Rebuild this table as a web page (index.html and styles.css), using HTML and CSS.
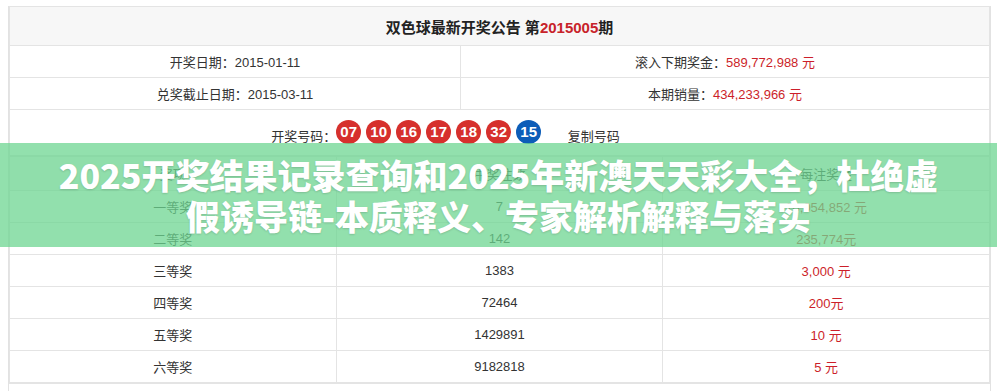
FILE: index.html
```html
<!DOCTYPE html>
<html lang="zh-CN">
  <head>
    <meta charset="UTF-8" />
    <title>双色球最新开奖公告</title>
    <link rel="stylesheet" href="styles.css">
  </head>

  <body>
    <div class="board">
      <table class="notice">
        <tr>
          <th colspan="2" class="title">双色球最新开奖公告 第<span class="red">2015005</span>期</th>
        </tr>
        <tr>
          <td class="half">开奖日期：2015-01-11</td>
          <td>滚入下期奖金：<span class="red">589,772,988 元</span></td>
        </tr>
        <tr>
          <td class="half">兑奖截止日期：2015-03-11</td>
          <td>本期销量：<span class="red">434,233,966 元</span></td>
        </tr>
        <tr>
          <td colspan="2" class="draw">
            开奖号码：<span class="ball">07</span><span class="ball">10</span><span class="ball">16</span><span class="ball">17</span><span class="ball">18</span><span class="ball">32</span><span class="ball blue">15</span>
            <a class="copy">复制号码</a>
          </td>
        </tr>
      </table>

      <table class="prizes">
        <tr class="head">
          <th>奖项</th>
          <th>中奖注数</th>
          <th>每注奖金</th>
        </tr>
        <tr><td>一等奖</td><td>7</td><td class="red">10,054,852 元</td></tr>
        <tr><td>二等奖</td><td>142</td><td class="red">235,774元</td></tr>
        <tr><td>三等奖</td><td>1383</td><td class="red">3,000 元</td></tr>
        <tr><td>四等奖</td><td>72464</td><td class="red">200元</td></tr>
        <tr><td>五等奖</td><td>1429891</td><td class="red">10 元</td></tr>
        <tr><td>六等奖</td><td>9182818</td><td class="red">5 元</td></tr>
      </table>
    </div>

    <!-- 页面上方的绿色标题横幅 -->
    <div class="banner">
      <h1>2025开奖结果记录查询和2025年新澳天天彩大全，杜绝虚<br />假诱导链-本质释义、专家解析解释与落实</h1>
    </div>
  </body>
</html>
```

FILE: styles.css
```css
body {
  margin: 0;
  height: 391px;
  overflow: hidden;
  background: #fff;
  font-family: "Liberation Sans", "Noto Sans CJK SC", sans-serif;
  font-size: 13px;
  color: #333;
}

.board {
  margin: 6px 6px 0 8px;
  height: 400px;
  border-left: 1px solid #e2e2e2;
  border-right: 1px solid #e2e2e2;
}

table {
  width: 100%;
  border-collapse: collapse;
}

td,
th {
  border: 1px solid #e4e4e4;
  text-align: center;
  padding: 0;
  font-weight: normal;
}

.red {
  color: #cc1f2a;
}

/* 公告表 */
.title {
  height: 38px;
  background: #f7f7f7;
  font-size: 15px;
  font-weight: bold;
  color: #222;
}

.title .red {
  color: #c8232a;
}

.notice td {
  height: 31px;
}

.notice .half {
  width: 450px;
}

.notice .draw {
  height: 45px;
  /* 号码组整体偏左 */
  padding-right: 108px;
  vertical-align: middle;
}

.ball {
  display: inline-block;
  width: 25px;
  height: 24px;
  margin-right: 5px;
  border-radius: 50%;
  background: #d6302d;
  color: #fff;
  font-size: 15px;
  font-weight: bold;
  line-height: 24px;
  text-align: center;
  vertical-align: 4px;
}

.ball.blue {
  background: #0d5db8;
}

.copy {
  margin-left: 18px;
  color: #333;
  cursor: pointer;
}

/* 奖金表 */
.prizes {
  border-bottom: 2px solid #e4e4e4;
}

.prizes th,
.prizes td {
  width: 33.33%;
  height: 31px;
}

.prizes .head th {
  height: 33px;
  background: #f7f7f7;
}

/* 横幅 */
.banner {
  position: absolute;
  top: 143px;
  left: 0;
  width: 997px;
  height: 104px;
  display: flex;
  align-items: center;
  justify-content: center;
  background: rgba(110, 214, 146, 0.75);
}

.banner h1 {
  margin: 0;
  font-family: "Noto Sans CJK SC", sans-serif;
  font-size: 34px;
  font-weight: 900;
  line-height: 41px;
  color: #fff;
  text-align: center;
  text-shadow: 0 1px 2px rgba(0, 0, 0, 0.15);
}
```
